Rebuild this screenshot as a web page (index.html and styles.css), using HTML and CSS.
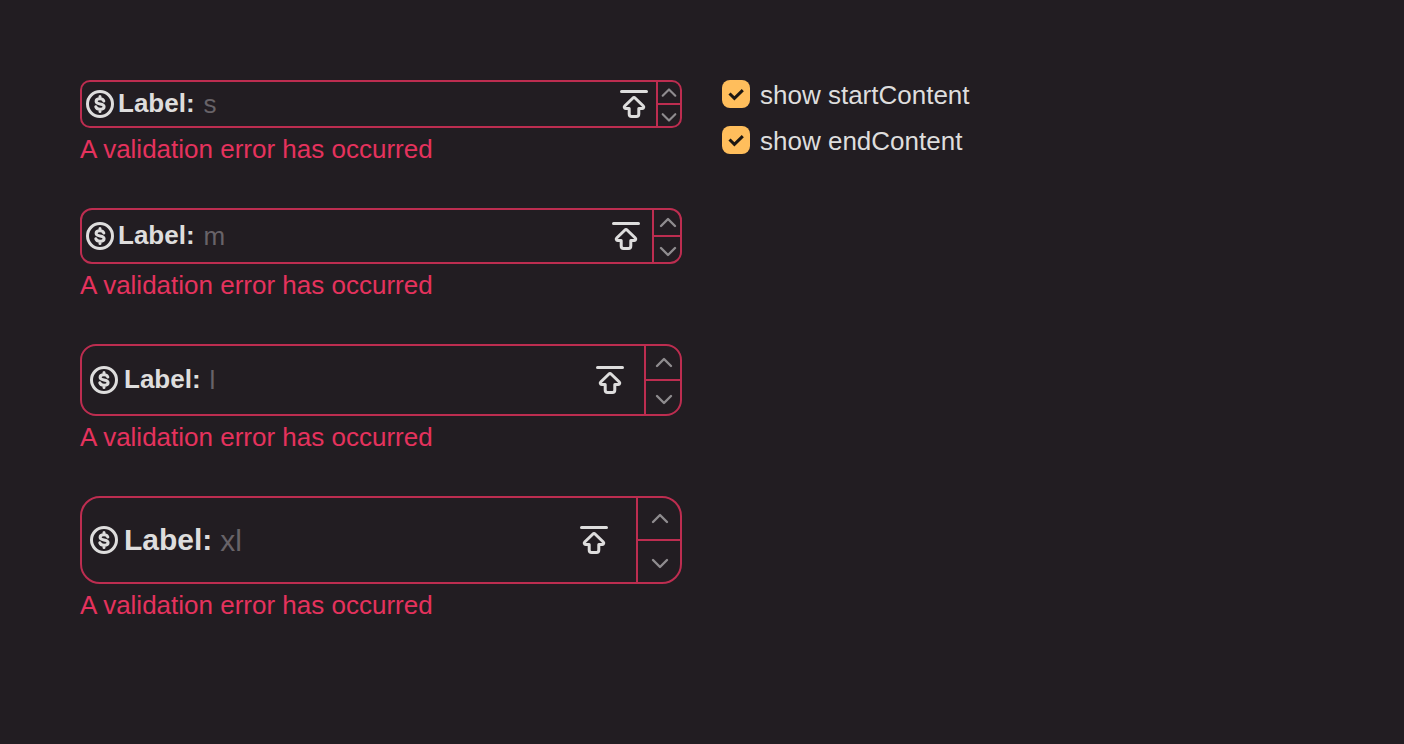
FILE: index.html
```html
<!DOCTYPE html>
<html lang="en">
<head>
<meta charset="utf-8">
<meta name="viewport" content="width=device-width, initial-scale=1">
<title>Number input</title>
<link rel="stylesheet" href="styles.css">
</head>
<body>
<svg class="sprite" aria-hidden="true">
  <symbol id="dollar" viewBox="0 0 32 32">
    <circle cx="16" cy="16" r="12.5"/>
    <path d="M19.800 13C19.200 11.500 17.900 10.800 16 10.800c-2.300 0-3.900.9-3.900 2.500 0 1.700 1.600 2.300 3.900 2.700s4.100 1 4.100 2.700c0 1.700-1.700 2.600-4.100 2.600-2.200 0-3.700-.9-4.200-2.500M16 8.500v2M16 21.500v2"/>
  </symbol>
  <symbol id="arrow" viewBox="0 0 32 32">
    <path d="M3.500 3.500h25M14.700 10.200 6.700 18c-.9.900-.4 2.400.9 2.400h3.600v5.700c0 1.300 1 2.400 2.400 2.400h4.800c1.400 0 2.400-1.100 2.400-2.400v-5.700h3.600c1.300 0 1.800-1.500.9-2.400l-8-7.800c-.7-.7-1.900-.7-2.600 0z"/>
  </symbol>
  <symbol id="up" viewBox="0 0 20 20"><path d="m3 13 7-7 7 7"/></symbol>
  <symbol id="down" viewBox="0 0 20 20"><path d="m3 8 7 7 7-7"/></symbol>
</svg>
<main class="page">
  <div class="fields">
    <div class="field field-s">
      <div class="control">
        <svg class="icon"><use href="#dollar"/></svg>
        <label class="label" for="size-s">Label:</label>
        <input class="input" id="size-s" type="text" inputmode="numeric" placeholder="s" aria-invalid="true" aria-describedby="error-s">
        <svg class="icon"><use href="#arrow"/></svg>
        <div class="stepper">
          <button class="step" type="button" aria-label="Increment"><svg class="chevron"><use href="#up"/></svg></button>
          <button class="step" type="button" aria-label="Decrement"><svg class="chevron"><use href="#down"/></svg></button>
        </div>
      </div>
      <div class="error" id="error-s">A validation error has occurred</div>
    </div>
    <div class="field field-m">
      <div class="control">
        <svg class="icon"><use href="#dollar"/></svg>
        <label class="label" for="size-m">Label:</label>
        <input class="input" id="size-m" type="text" inputmode="numeric" placeholder="m" aria-invalid="true" aria-describedby="error-m">
        <svg class="icon"><use href="#arrow"/></svg>
        <div class="stepper">
          <button class="step" type="button" aria-label="Increment"><svg class="chevron"><use href="#up"/></svg></button>
          <button class="step" type="button" aria-label="Decrement"><svg class="chevron"><use href="#down"/></svg></button>
        </div>
      </div>
      <div class="error" id="error-m">A validation error has occurred</div>
    </div>
    <div class="field field-l">
      <div class="control">
        <svg class="icon"><use href="#dollar"/></svg>
        <label class="label" for="size-l">Label:</label>
        <input class="input" id="size-l" type="text" inputmode="numeric" placeholder="l" aria-invalid="true" aria-describedby="error-l">
        <svg class="icon"><use href="#arrow"/></svg>
        <div class="stepper">
          <button class="step" type="button" aria-label="Increment"><svg class="chevron"><use href="#up"/></svg></button>
          <button class="step" type="button" aria-label="Decrement"><svg class="chevron"><use href="#down"/></svg></button>
        </div>
      </div>
      <div class="error" id="error-l">A validation error has occurred</div>
    </div>
    <div class="field field-xl">
      <div class="control">
        <svg class="icon"><use href="#dollar"/></svg>
        <label class="label" for="size-xl">Label:</label>
        <input class="input" id="size-xl" type="text" inputmode="numeric" placeholder="xl" aria-invalid="true" aria-describedby="error-xl">
        <svg class="icon"><use href="#arrow"/></svg>
        <div class="stepper">
          <button class="step" type="button" aria-label="Increment"><svg class="chevron"><use href="#up"/></svg></button>
          <button class="step" type="button" aria-label="Decrement"><svg class="chevron"><use href="#down"/></svg></button>
        </div>
      </div>
      <div class="error" id="error-xl">A validation error has occurred</div>
    </div>
  </div>
  <div class="options">
    <label class="option">
      <span class="box"><input class="check" type="checkbox" checked><svg class="tick" viewBox="0 0 28 28" aria-hidden="true"><path d="m7.500 13.500 4.900 4.900 8.400-8.300"/></svg></span>
      <span>show startContent</span>
    </label>
    <label class="option">
      <span class="box"><input class="check" type="checkbox" checked><svg class="tick" viewBox="0 0 28 28" aria-hidden="true"><path d="m7.500 13.500 4.900 4.900 8.400-8.300"/></svg></span>
      <span>show endContent</span>
    </label>
  </div>
</main>
</body>
</html>
```
FILE: styles.css
```css
:root {
  --bg: #221d22;
  --text: #dedddd;
  --hint: #686368;
  --danger: #e5325d;
  --line: #bd2d50;
  --brand: #ffbe5c;
}

* {
  box-sizing: border-box;
}

body {
  margin: 0;
  background: var(--bg);
  color: var(--text);
  font: 26px/30px "Liberation Sans", Arial, sans-serif;
}

.sprite {
  display: none;
}

.page {
  display: flex;
  align-items: flex-start;
  gap: 40px;
  padding: 80px;
}

.fields {
  display: flex;
  flex-direction: column;
  flex: 0 1 602px;
  gap: 40px;
  min-width: 0;
}

.control {
  display: flex;
  align-items: center;
  min-height: var(--height);
  padding-left: var(--inset);
  border: 2px solid var(--line);
  border-radius: var(--radius);
}

.field-s {
  --height: 48px;
  --inset: 2px;
  --radius: 10px;
  --step: 24px;
  --end: 6px;
  --label-gap: 2px;
  --chevron: 18px;
  --nudge: 0;
}

.field-m {
  --height: 56px;
  --inset: 2px;
  --radius: 12px;
  --step: 28px;
  --end: 10px;
  --label-gap: 2px;
  --chevron: 20px;
  --nudge: 2px;
}

.field-l {
  --height: 72px;
  --inset: 6px;
  --radius: 16px;
  --step: 36px;
  --end: 18px;
  --label-gap: 4px;
  --chevron: 20px;
  --nudge: 2px;
}

.field-xl {
  --height: 88px;
  --inset: 6px;
  --radius: 20px;
  --step: 44px;
  --end: 26px;
  --label-gap: 4px;
  --chevron: 20px;
  --nudge: 2px;
}

.icon {
  flex: none;
  width: 32px;
  height: 32px;
  fill: none;
  stroke: currentColor;
  stroke-width: 3;
  stroke-linecap: round;
  stroke-linejoin: round;
}

.label {
  margin-left: var(--label-gap);
  padding-bottom: 2px;
  font-weight: 700;
}

.input {
  flex: 1;
  min-width: 0;
  margin-left: 9px;
  padding: 0;
  border: 0;
  outline: 0;
  background: none;
  color: inherit;
  font: inherit;
}

.input::placeholder {
  color: var(--hint);
  opacity: 1;
}

.field-xl .label,
.field-xl .input {
  font-size: 30px;
  line-height: 34px;
}

.field-xl .label {
  padding-bottom: 0;
}

.field-xl .input {
  margin-left: 8px;
  padding-top: 2px;
}

.stepper {
  display: flex;
  flex-direction: column;
  align-self: stretch;
  width: var(--step);
  margin-left: var(--end);
  border-left: 2px solid var(--line);
}

.step {
  display: flex;
  flex: 1 1 0;
  align-items: center;
  justify-content: center;
  box-sizing: content-box;
  min-height: 0;
  padding: 0 0 0 var(--nudge);
  border: 0;
  background: none;
  color: #8f8c8f;
}

.step:first-child {
  border-bottom: 2px solid var(--line);
}

.chevron {
  flex: none;
  width: var(--chevron);
  height: var(--chevron);
  fill: none;
  stroke: currentColor;
  stroke-width: 2.400;
  stroke-linecap: round;
  stroke-linejoin: round;
}

.error {
  padding: 6px 0 4px;
  color: var(--danger);
}

.options {
  display: flex;
  flex-direction: column;
  gap: 16px;
}

.option {
  display: flex;
  align-items: flex-start;
  gap: 10px;
}

.box {
  display: grid;
  flex: none;
  width: 28px;
  height: 28px;
}

.check,
.tick {
  grid-area: 1 / 1;
  width: 28px;
  height: 28px;
  margin: 0;
}

.check {
  appearance: none;
  border-radius: 8px;
  border: 2px solid var(--hint);
}

.check:checked {
  border: 0;
  background: var(--brand);
}

.tick {
  visibility: hidden;
  fill: none;
  stroke: #1c1712;
  stroke-width: 3;
  pointer-events: none;
}

.check:checked + .tick {
  visibility: visible;
}
```
